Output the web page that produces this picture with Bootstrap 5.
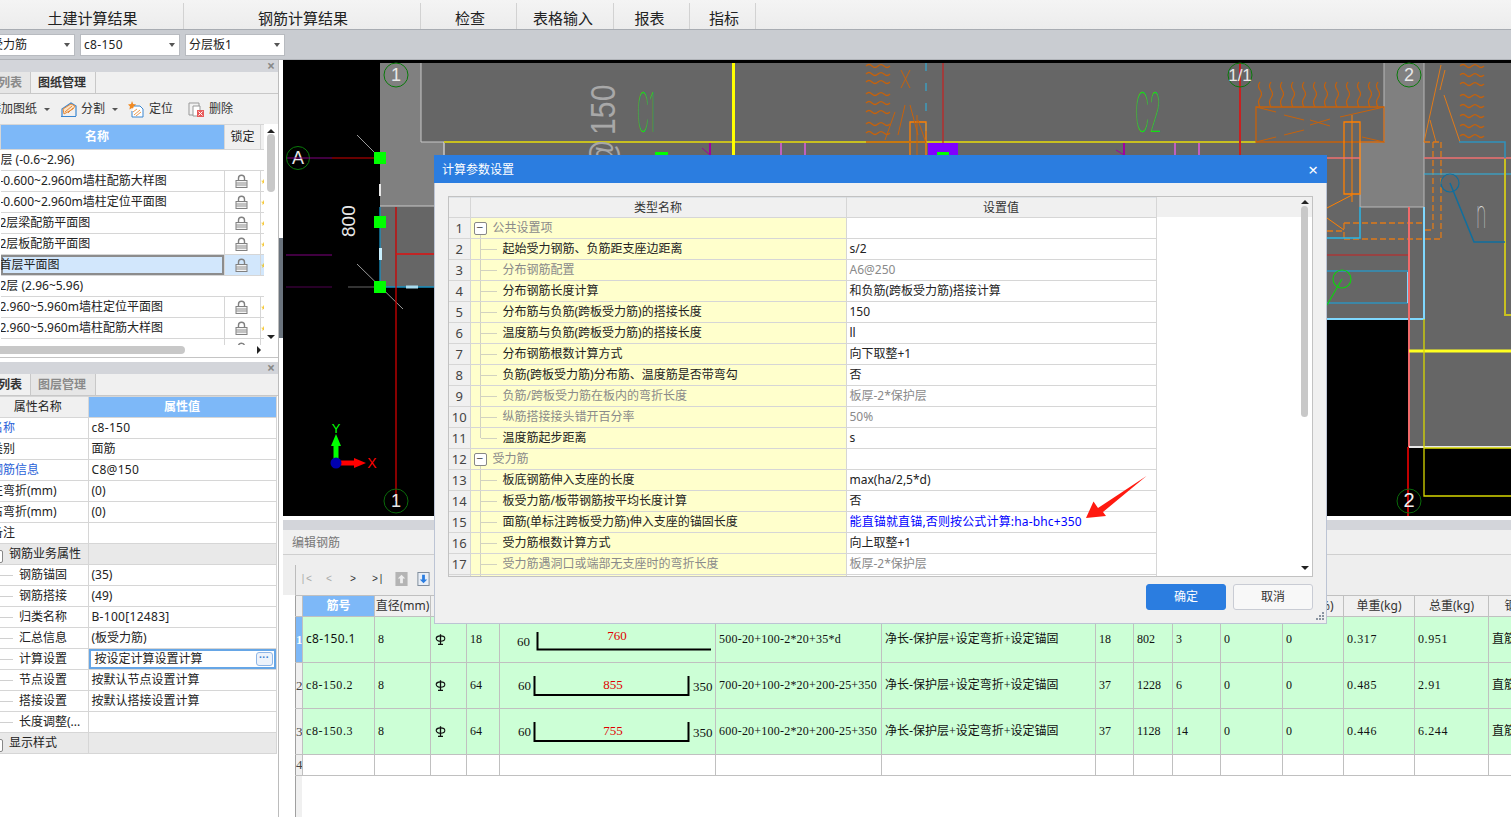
<!DOCTYPE html>
<html lang="zh-CN">
<head>
<meta charset="utf-8">
<title>计算参数设置</title>
<link rel="stylesheet" href="https://cdn.jsdelivr.net/npm/bootstrap@5.3.0/dist/css/bootstrap.min.css">
<style>
html,body{height:817px;overflow:hidden}
body{width:1511px;background:#fff;color:#222;font-family:"Noto Sans","Noto Sans CJK SC",sans-serif;font-size:12px;line-height:20px}
.sprite{width:0;height:0}
.topbar{height:30px;background:linear-gradient(#f4f4f4,#ececec);border-bottom:1px solid #a8acb2;color:#222;font-size:15px;padding-top:3px}
.topitem{border-right:1px solid #d2d2d2;height:26px;line-height:30px;text-align:center}
.ti1{width:184px;padding-left:2px}.ti2{width:237px;padding-left:2px}.ti3{width:96px;padding-left:3px}.ti4{width:97px;padding-right:4px}.ti5{width:76px;padding-right:4px}.ti6{width:66px;padding-left:3px}
.filterbar{height:30px;background:#c9ccd1;border-bottom:1px solid #b0b3b8;padding:4px 0 0;gap:5px}
.pick{height:22px;background:#fff;border:1px solid #b8bbc0;line-height:20px;padding-left:3px;overflow:hidden}
.pk1{width:75px;padding-left:0;border-left:0}.pk2,.pk3{width:100px}
.pick .clipl{margin-left:-9px}
.tri{width:0;height:0;border-left:3px solid transparent;border-right:3px solid transparent;border-top:4px solid #555;margin-right:4px}
.mainrow{height:757px}
.leftcol{width:279px;border-right:1px solid #bcbcbc;overflow:hidden}
.gutter{width:4px;background:#fff;padding-top:178px}
.gutter i{display:block;height:100px;background:#6a737d}
.rightcol{width:1228px;height:757px}
.strip{height:12px;background:#d3d5da;font-size:14px;line-height:11px;color:#888;padding-right:3px;text-align:right;font-weight:700}
.tabs{height:22px;background:#f0f0f0;border-bottom:1px solid #c8c8c8}
.tb{padding:0 7px;line-height:21px;border-right:1px solid #c8c8c8;font-weight:700;color:#333;white-space:nowrap;overflow:hidden}
.tb.off{background:#e6e6e6;color:#8a8a8a}
.tbf{width:31px;padding:0 8px 0 0}
.tbf2{width:65px}
.toolrow{height:30px;background:#f0f0f0;color:#333;white-space:nowrap}
.toolrow svg{flex:none}
.mcaret{width:0;height:0;border-left:3px solid transparent;border-right:3px solid transparent;border-top:3px solid #555}
.tw1{margin-left:-11px}
.c1{margin-left:7px}.c2{margin-left:10px}.gx1{margin-left:3px}.gx2{margin-left:5px}.m1{margin-left:7px}.m2{margin-left:10px}.m3{margin-left:15px}
.listbox{height:221px;overflow:hidden}
.listmain{width:264px;overflow:hidden}
.gt{table-layout:fixed;margin:0;border-collapse:collapse;--bs-table-bg:transparent}
.gt td,.gt th{padding:0 3px;height:21px;line-height:20px;font-size:12px;font-weight:400;white-space:nowrap;overflow:hidden;border:1px solid #d6d6d6;color:#222;background:transparent;box-shadow:none;vertical-align:middle}
.lt{width:264px}
.lt col:nth-child(1){width:224px}.lt col:nth-child(2){width:36px}.lt col:nth-child(3){width:4px}
.lt th{height:25px!important;background:#f0f0f0!important;text-align:center}
.lt th.namec{padding-right:34px}
.lt th.blu,.pt th.blu,.bt th.blu{background:#7db8f8!important;color:#fff;font-weight:700;text-align:center}
.lt td:first-child{padding-left:0;border-left:0}
.lt td:nth-child(3){padding:0;color:#f5c542;font-size:6px;border-right:0}
.lt .txt{margin-left:-1px}
.lt .gp{margin-left:-12px}
.lt td.lkc{padding:0;text-align:center}
.lk{width:13px;height:14px;display:block;margin:0 auto 0 10px}
.lt tr.selrow td{background:#d2e7fc}
.lt tr.selrow td:first-child{box-shadow:inset 0 0 0 2px #8c8c8c}
.vscroll{width:14px;padding-top:5px;padding-left:3px}
.vscroll .up,.gridbar .up{width:0;height:0;border-left:4px solid transparent;border-right:4px solid transparent;border-bottom:4px solid #222}
.vscroll .dn,.gridbar .dn{width:0;height:0;border-left:4px solid transparent;border-right:4px solid transparent;border-top:4px solid #222}
.vscroll .thumb{width:8px;height:58px;background:#c8c8c8;border-radius:4px;margin-top:1px;margin-bottom:143px}
.vscroll .dn{margin-top:4px}
.hscroll{height:13px;border-bottom:1px solid #c4c4c4;padding-top:1px}
.hscroll .thumb{width:185px;height:8px;background:#c8c8c8;border-radius:0 4px 4px 0}
.hscroll .rt{width:0;height:0;border-top:4px solid transparent;border-bottom:4px solid transparent;border-left:4px solid #222;margin-left:72px}
.gap4{height:4px;background:#fff}
.pt{width:276px}
.pt col:nth-child(1){width:88px}.pt col:nth-child(2){width:188px}
.pt th{background:#f0f0f0!important;text-align:center;line-height:20px}
.pt th.attr{padding-right:12px}
.pt td:first-child,.pt th:first-child{border-left:0;padding-left:0}
.nm{margin-left:-9px}
.nm.bl{color:#2a62d8}
.lt1{letter-spacing:.3px}
.pt tr.grp td{background:#e9e9e9}
.bx{display:inline-block;width:13px;height:13px;border:1px solid #888;border-radius:2px;line-height:9px;text-align:center;vertical-align:0;font-size:12px;color:#555;background:#fff}
.pt .bx{margin-left:-10px;margin-right:6px;vertical-align:-2px}
.pt td.tr1{background:linear-gradient(#d0d0d0,#d0d0d0) 0 50%/13px 1px no-repeat;padding-left:19px}
.pt td.focusc{box-shadow:inset 0 0 0 2px #66a6e6;padding-left:6px}
.more{width:17px;height:14px;border:1px solid #8fb6e6;border-radius:3px;background:#edf3fb;color:#3a7fd0;font-size:10px;line-height:8px;text-align:center;letter-spacing:.5px;margin-right:0;font-weight:700}
.canvas{display:block;flex:none}
.wgap{height:4px;background:#fff;flex:none}
.stripr{height:10px;background:#d3d5da;flex:none}
.edhead{height:25px;background:#f0f0f0;color:#777;line-height:25px;padding-left:9px;border-bottom:1px solid #cfcfcf;flex:none}
.edtool{height:40px;background:#eeeeee;padding:10px 0 0 12px;flex:none}
.edtool .inner{height:30px;border-left:1px solid #bcbcbc;padding-left:4px}
.edtool svg{margin-top:7px}
.nv{font-family:"Liberation Mono",monospace;font-size:10px;color:#333;line-height:30px}
.nv.gy{color:#aaa}
.g14{margin-left:14px}.g18{margin-left:18px}.g16{margin-left:16px}.g11{margin-left:11px}.g9{margin-left:9px}
.ebody{padding-left:12px;height:222px;overflow:hidden;flex:none}
.bt{width:1273px;border-top:1px solid #a0a0a0}
.bt col:nth-child(1){width:7px}.bt col:nth-child(2){width:72px}.bt col:nth-child(3){width:56px}.bt col:nth-child(4){width:36px}.bt col:nth-child(5){width:33px}.bt col:nth-child(6){width:216px}.bt col:nth-child(7){width:166px}.bt col:nth-child(8){width:214px}.bt col:nth-child(9){width:38px}.bt col:nth-child(10){width:39px}.bt col:nth-child(11){width:48px}.bt col:nth-child(12){width:62px}.bt col:nth-child(13){width:61px}.bt col:nth-child(14){width:71px}.bt col:nth-child(15){width:74px}.bt col:nth-child(16){width:80px}
.bt td,.bt th{border-color:#c0c0c0;color:#111}
.bt th{height:21px;background:#f0f0f0!important;text-align:center;padding:0;color:#333}
.bt td{height:46px;background:#ccffd6;font-family:"Liberation Serif","Noto Sans CJK SC",serif;padding:0 3px 1px}
.bt tr.lastrow td{height:20px;background:#fff}
.bt td.rn,.bt th.rn{padding:0;text-align:center;background:#f0f0f0!important;border-left:1px solid #a0a0a0;font-size:13px;color:#444;overflow:hidden}
.bt td.rn.on{background:#7db8f8!important;color:#fff;font-weight:700}
.bt td.sans{font-family:"Noto Sans","Noto Sans CJK SC",sans-serif;letter-spacing:.3px}
.bt td.shp{padding:0}
.shpsvg{display:block;width:216px;height:45px}
.shpsvg text{font-family:"Liberation Serif",serif;font-size:13px;fill:#111}
.shpsvg .rd{fill:#e00000}
.bt td.dc{letter-spacing:.6px}
.bt td.fm{letter-spacing:.22px}
.phi{display:block;width:11px;height:11px;margin-left:1px}
.rnfill{width:7px;background:#f0f0f0;border-left:1px solid #a0a0a0;height:60px}
.calcdlg{position:absolute;left:434px;top:155px;width:893px;height:469px;background:#f0f0f0;border:1px solid #bcc4d4;border-top:0;z-index:5}
.calcttl{height:28px;background:#2b7de0;color:#fff;padding:1px 8px 0;line-height:28px;margin:0 -1px}
.calcx{font-size:17px;font-weight:400;margin-right:1px}
.gridbox{margin:13px 13px 0 13px;height:381px;border:1px solid #c2c2c2;background:linear-gradient(#f0f0f0,#f0f0f0) top/100% 20px no-repeat #fff;overflow:hidden}
.gridmain{width:849px;overflow:hidden}
.dt{width:707px}
.dt col:nth-child(1){width:21px}.dt col:nth-child(2){width:376px}.dt col:nth-child(3){width:310px}
.dt th{height:19px!important;line-height:19px;text-align:center;background:#f0f0f0!important;border-top:0;color:#333}
.dt td:first-child,.dt th:first-child{border-left:0;background:#f0f0f0;text-align:center;font-size:13px;color:#444;padding:0}
.dt td:nth-child(2){background:#ffffcc linear-gradient(#d2d2c0,#d2d2c0) 9px 0/1px 100% no-repeat;padding-left:32px}
.dt tr.it td:nth-child(2){background:linear-gradient(#d2d2c0,#d2d2c0) 9px 0/1px 100% no-repeat,linear-gradient(#d2d2c0,#d2d2c0) 10px 50%/16px 1px no-repeat,#ffffcc}
.dt tr.last td:nth-child(2){background:linear-gradient(#d2d2c0,#d2d2c0) 9px 0/1px 50% no-repeat,linear-gradient(#d2d2c0,#d2d2c0) 10px 50%/16px 1px no-repeat,#ffffcc}
.dt tr.gh td:nth-child(2){padding-left:3px;color:#8a8a8a;background:linear-gradient(#d2d2c0,#d2d2c0) 9px 15px/1px 6px no-repeat,#ffffcc}
.dt tr.gh .bx{margin-right:6px}
.dt td.gr,.dt tr.off td:nth-child(2){color:#8a8a8a}
.dt td.bv{color:#0000ff;letter-spacing:.15px}
.gridbar{width:15px;padding:3px 0 0 4px}
.gridbar .thumb{width:7px;height:211px;border-radius:4px;background:#c8c8c8;margin:2px 0 149px}
.dlgbtns{margin:7px 13px 0 0;gap:7px}
.bta,.btb{width:80px;height:26px;font-size:12px;line-height:24px;padding:0;border-radius:3px}
.bta{background:#2b7de0;border:1px solid #2b7de0;color:#fff}
.btb{background:#f8f8f8;border:1px solid #c9ccd4;color:#333}
.grip{position:absolute;right:2px;bottom:2px;width:9px;height:9px}
.redarrow{position:absolute;left:0;top:0;width:893px;height:469px;pointer-events:none}
</style>
</head>
<body class="position-relative">
<svg class="sprite position-absolute" aria-hidden="true">
<defs>
<symbol id="lock" viewBox="0 0 13 14"><path d="M3.5 7V4.2a3 3 0 0 1 6 0V7" fill="none" stroke="#808080" stroke-width="1.4"/><rect x="1" y="6.5" width="11" height="7" fill="#f4f4f4" stroke="#808080"/><path d="M1 9h11M1 11h11" stroke="#909090"/></symbol>
<symbol id="phi" viewBox="0 0 11 11"><ellipse cx="5.500" cy="4.600" rx="4.300" ry="2.700" fill="none" stroke="#111" stroke-width="1.100"/><path d="M5.500 .3v10M3 10.300h5" stroke="#111" stroke-width="1.300"/></symbol>
</defs>
</svg>

<div class="topbar d-flex">
<div class="topitem ti1">土建计算结果</div>
<div class="topitem ti2">钢筋计算结果</div>
<div class="topitem ti3">检查</div>
<div class="topitem ti4">表格输入</div>
<div class="topitem ti5">报表</div>
<div class="topitem ti6">指标</div>
</div>

<div class="filterbar d-flex">
<div class="pick pk1 d-flex justify-content-between align-items-center"><span class="clipl">受力筋</span><i class="tri"></i></div>
<div class="pick pk2 d-flex justify-content-between align-items-center"><span class="lt1">c8-150</span><i class="tri"></i></div>
<div class="pick pk3 d-flex justify-content-between align-items-center"><span>分层板1</span><i class="tri"></i></div>
</div>

<div class="mainrow d-flex">
<aside class="leftcol flex-shrink-0">
  <div class="strip">×</div>
  <div class="tabs d-flex">
    <div class="tb off tbf d-flex justify-content-end">列表</div>
    <div class="tb tbf2">图纸管理</div>
  </div>
  <div class="toolrow d-flex align-items-center">
    <span class="tw1">添加图纸</span><i class="mcaret c1"></i>
    <svg class="c2" width="18" height="18" viewBox="0 0 18 18"><path d="M1 16.5h15M2 16V9l9-6 5 3v10" fill="none" stroke="#3a86d0" stroke-width="1.2"/><path d="M3 9l8-5 4 2-2 3-9 5zM5 12l7-6M8 13l5-5" fill="#fbe3c8" stroke="#e58a3a"/></svg>
    <span class="gx1">分割</span><i class="mcaret m1"></i>
    <svg class="m2" width="16" height="18" viewBox="0 0 16 18"><path d="M4 1l1.2 3 3 .4-2.2 2 .6 3L4 8 1.400 9.400 2 6.400 0 4.400l3-.4z" fill="#f08a24"/><path d="M6 6h6l3 3v8H4v-6" fill="#fff" stroke="#3a86d0"/><path d="M6 15l6-5M8 16l5-4M5 12l4-3" stroke="#ea9a50"/></svg>
    <span class="gx2">定位</span>
    <svg class="m3" width="16" height="18" viewBox="0 0 16 18"><path d="M3 3h8v12H1V3z" fill="#f2f2f2" stroke="#999"/><path d="M5 6h7v10H5z" fill="#fff" stroke="#999"/><rect x="9" y="10" width="7" height="7" fill="#e85a5a"/><path d="M10.500 11.500l4 4m0-4l-4 4" stroke="#fff"/></svg>
    <span class="gx2">删除</span>
  </div>
  <div class="listbox d-flex">
    <div class="listmain">
      <table class="table table-bordered gt lt">
        <colgroup><col><col><col></colgroup>
        <thead><tr><th class="blu namec">名称</th><th>锁定</th><th></th></tr></thead>
        <tbody>
          <tr><td colspan="3"><span class="gp">首层 (-0.6~2.96)</span></td></tr>
          <tr><td><span class="txt">-0.600~2.960m墙柱配筋大样图</span></td><td class="lkc"><svg class="lk"><use href="#lock"/></svg></td><td>★</td></tr>
          <tr><td><span class="txt">-0.600~2.960m墙柱定位平面图</span></td><td class="lkc"><svg class="lk"><use href="#lock"/></svg></td><td>★</td></tr>
          <tr><td><span class="txt">2层梁配筋平面图</span></td><td class="lkc"><svg class="lk"><use href="#lock"/></svg></td><td>★</td></tr>
          <tr><td><span class="txt">2层板配筋平面图</span></td><td class="lkc"><svg class="lk"><use href="#lock"/></svg></td><td>★</td></tr>
          <tr class="selrow"><td><span class="txt">首层平面图</span></td><td class="lkc"><svg class="lk"><use href="#lock"/></svg></td><td>★</td></tr>
          <tr><td colspan="3"><span class="txt">2层 (2.96~5.96)</span></td></tr>
          <tr><td><span class="txt">2.960~5.960m墙柱定位平面图</span></td><td class="lkc"><svg class="lk"><use href="#lock"/></svg></td><td>★</td></tr>
          <tr><td><span class="txt">2.960~5.960m墙柱配筋大样图</span></td><td class="lkc"><svg class="lk"><use href="#lock"/></svg></td><td>★</td></tr>
          <tr><td></td><td class="lkc"><svg class="lk"><use href="#lock"/></svg></td><td></td></tr>
        </tbody>
      </table>
    </div>
    <div class="vscroll">
      <div class="up"></div>
      <div class="thumb"></div>
      <div class="dn"></div>
    </div>
  </div>
  <div class="hscroll d-flex">
    <div class="thumb"></div>
    <div class="rt"></div>
  </div>
  <div class="gap4"></div>
  <div class="strip">×</div>
  <div class="tabs d-flex">
    <div class="tb tbf d-flex justify-content-end">列表</div>
    <div class="tb off tbf2">图层管理</div>
  </div>
  <table class="table table-bordered gt pt">
    <colgroup><col><col></colgroup>
    <thead><tr><th class="attr">属性名称</th><th class="blu">属性值</th></tr></thead>
    <tbody>
      <tr><td><span class="nm bl">名称</span></td><td><span class="lt1">c8-150</span></td></tr>
      <tr><td><span class="nm">类别</span></td><td>面筋</td></tr>
      <tr><td><span class="nm bl">钢筋信息</span></td><td><span class="lt1">C8@150</span></td></tr>
      <tr><td><span class="nm">左弯折(mm)</span></td><td>(0)</td></tr>
      <tr><td><span class="nm">右弯折(mm)</span></td><td>(0)</td></tr>
      <tr><td><span class="nm">备注</span></td><td></td></tr>
      <tr class="grp"><td><span class="bx">+</span>钢筋业务属性</td><td></td></tr>
      <tr><td class="tr1">钢筋锚固</td><td>(35)</td></tr>
      <tr><td class="tr1">钢筋搭接</td><td>(49)</td></tr>
      <tr><td class="tr1">归类名称</td><td><span class="lt1">B-100[12483]</span></td></tr>
      <tr><td class="tr1">汇总信息</td><td>(板受力筋)</td></tr>
      <tr><td class="tr1">计算设置</td><td class="focusc"><div class="d-flex justify-content-between align-items-center"><span>按设定计算设置计算</span><span class="more">···</span></div></td></tr>
      <tr><td class="tr1">节点设置</td><td>按默认节点设置计算</td></tr>
      <tr><td class="tr1">搭接设置</td><td>按默认搭接设置计算</td></tr>
      <tr><td class="tr1">长度调整(...</td><td></td></tr>
      <tr class="grp"><td><span class="bx">+</span>显示样式</td><td></td></tr>
    </tbody>
  </table>
</aside>
<div class="gutter flex-shrink-0"><i></i></div>
<div class="rightcol d-flex flex-column">
<svg class="canvas" width="1228" height="456" viewBox="283 60 1228 456" font-family="Liberation Sans, sans-serif">
<defs>
<path id="wh" d="M0 0q3-3 6 0t6 0 6 0 6 0" fill="none" stroke="#c8620a" stroke-width="1.200"/>
<path id="wv" d="M0 0q-3 4 0 8t0 8 0 9" fill="none" stroke="#c8620a" stroke-width="1.200"/>
</defs>
<rect x="283" y="60" width="1228" height="456" fill="#000"/>
<path d="M380 63H1511V447H1409V319H900V287H380Z" fill="#666"/>
<path d="M380 63H421V142H444V206H380Z M1384 63H1424V207H1360V142H1384Z" fill="#808080"/>
<path d="M421 63V142H444V155M380 206H444V142" fill="none" stroke="#c8c8c8"/>
<path d="M1384 63V142H1360V207H1424V63" fill="none" stroke="#b8b8b8"/>
<path d="M444 142H1256" stroke="#c8c020" stroke-width="2"/>
<path d="M733.500 63V155" stroke="#ffff00" stroke-width="3"/>
<path d="M710 143V155" stroke="#a000a0" stroke-width="2"/><path d="M702 148L710 155" stroke="#a000a0"/>
<path d="M781 143V155M805 143V155M1175 143V155M1199 143V155" stroke="#c060c0" stroke-width="2"/>
<path d="M1124 143V155" stroke="#a000a0" stroke-width="2"/><path d="M1116 150L1124 155" stroke="#a000a0"/>
<rect x="655" y="152" width="13" height="4" fill="#0f0"/>
<rect x="928" y="143" width="30" height="13" fill="#8000ff"/>
<rect x="937" y="152" width="12" height="4" fill="#0f0"/>
<path d="M926 63V143" stroke="#29b6e8" stroke-dasharray="8 12"/>
<path d="M943 63V143" stroke="#c82020" stroke-width="1.200"/>
<path d="M910 155V122H926V155" fill="none" stroke="#ff8000" stroke-width="1.300"/>
<path d="M901 70L910 88M910 70L901 88M905 105L898 135M910 105L918 135M885 140L895 112M918 120L926 143M917 115V155" fill="none" stroke="#c8620a"/>
<path d="M866 142H926" stroke="#c8620a" stroke-width="1.300"/>
<use href="#wh" x="866" y="66"/><use href="#wh" x="866" y="74"/><use href="#wh" x="866" y="82"/><use href="#wh" x="866" y="94"/><use href="#wh" x="866" y="103"/><use href="#wh" x="866" y="112"/><use href="#wh" x="866" y="124"/><use href="#wh" x="866" y="133"/>
<path d="M1256 107H1384V142H1256Z" fill="none" stroke="#c8620a" stroke-width="1.300"/>
<path d="M1256 142L1276 137M1256 107L1276 112M1284 115L1304 120M1284 135L1304 130M1310 125L1330 119M1310 120L1330 126M1340 117L1362 112M1362 137L1384 142M1362 112L1384 107" stroke="#c8620a"/>
<use href="#wv" x="1260" y="82"/><use href="#wv" x="1271" y="82"/><use href="#wv" x="1282" y="82"/><use href="#wv" x="1293" y="82"/><use href="#wv" x="1304" y="82"/><use href="#wv" x="1315" y="82"/><use href="#wv" x="1326" y="82"/><use href="#wv" x="1337" y="82"/><use href="#wv" x="1348" y="82"/><use href="#wv" x="1359" y="82"/><use href="#wv" x="1370" y="82"/><use href="#wv" x="1378" y="82"/>
<path d="M1344 122H1360V194H1344Z" fill="none" stroke="#ff8000" stroke-width="1.300"/>
<path d="M1352 115V202M1327 208L1352 195M1327 218L1344 230" stroke="#ff8000"/>
<path d="M1344 223H1424M1327 231H1344M1344 239H1441M1441 142V239M1433 142V230H1424M1424 142H1441M1344 223V239" fill="none" stroke="#e07a18" stroke-width="1.300" stroke-dasharray="6 3"/>
<path d="M1424 142L1441 65M1430 120L1436 142M1444 95L1460 142M1445 70L1440 90" stroke="#e07a18" fill="none"/>
<use href="#wh" x="1460" y="66"/><use href="#wh" x="1460" y="75"/><use href="#wh" x="1460" y="84"/><use href="#wh" x="1460" y="96"/><use href="#wh" x="1460" y="106"/><use href="#wh" x="1460" y="116"/><use href="#wh" x="1460" y="126"/><use href="#wh" x="1460" y="136"/>
<path d="M1327 158H1360M1424 158H1511" stroke="#f07070" stroke-width="1.500"/>
<path d="M1424 174H1511" stroke="#29b6e8"/>
<path d="M1459 142H1505V158" fill="none" stroke="#2f93bd" stroke-width="1.500"/>
<path d="M1505 159V315H1511" fill="none" stroke="#c8c020" stroke-width="2"/>
<circle cx="1450" cy="183" r="9" fill="none" stroke="#0f6f9f" stroke-width="1.200"/>
<path d="M1450 183L1474 242H1505" fill="none" stroke="#0f6f9f" stroke-width="1.500"/>
<text transform="translate(1476,228) scale(.45,1)" font-size="40" font-family="Inter, Lato, sans-serif" font-weight="100" fill="#d8d8d8">n</text>
<path d="M1360 207V238H1327" fill="none" stroke="#29b6e8" stroke-width="1.500"/>
<path d="M1424 207V319H1327" fill="none" stroke="#7fd8ff" stroke-width="2"/>
<path d="M1327 255H1408" stroke="#c82020" stroke-width="1.200"/>
<path d="M1327 271H1408V303H1327" fill="none" stroke="#2f93bd" stroke-width="1.500"/>
<path d="M1408 272V303" stroke="#7fd8ff" stroke-width="2"/>
<circle cx="1342" cy="279" r="9" fill="none" stroke="#10d010" stroke-width="1.200"/>
<path d="M1342 279L1327 305" stroke="#10d010" stroke-width="1.200"/>
<path d="M1409 207V447H1511" fill="none" stroke="#f06a6a" stroke-width="2"/>
<path d="M1409 447H1511" stroke="#e8e8e8" stroke-width="2"/>
<path d="M1408 447V516" stroke="#c00000" stroke-width="2"/>
<path d="M1409 351H1511" stroke="#ffff20" stroke-width="3"/>
<path d="M1424 319V496H1511M1424 448H1511" fill="none" stroke="#d8d800" stroke-width="1.300"/>
<path d="M1240 63V155" stroke="#c82020" stroke-width="2"/>
<circle cx="1240" cy="75" r="12" fill="none" stroke="#0a7a0a"/>
<text x="1240" y="81" font-size="17" fill="#e8e8e8" text-anchor="middle">1/1</text>
<circle cx="1409" cy="75" r="12" fill="none" stroke="#0a7a0a"/>
<text x="1409" y="81" font-size="18" fill="#e8e8e8" text-anchor="middle">2</text>
<circle cx="396" cy="75" r="12" fill="none" stroke="#0a7a0a"/>
<text x="396" y="81" font-size="18" fill="#e8e8e8" text-anchor="middle">1</text>
<circle cx="298" cy="158" r="11.500" fill="none" stroke="#0a7a0a"/>
<text x="298" y="164" font-size="18" fill="#e8e8e8" text-anchor="middle">A</text>
<path d="M287 158H332" stroke="#800080" stroke-width="1.200"/><path d="M332 158H375" stroke="#d00000" stroke-width="1.200"/>
<path d="M357 135L375 153M357 264L403 309" stroke="#9a9a9a"/>
<path d="M380 207V287H434" fill="none" stroke="#1890c0" stroke-width="1.300"/>
<path d="M396 207V501" stroke="#d00000" stroke-width="1.300"/>
<path d="M396 254H434" stroke="#e01010" stroke-width="1.300"/>
<path d="M286 255H332" stroke="#800080"/><path d="M286 287H332" stroke="#500050"/><path d="M348 287H375" stroke="#666"/>
<path d="M380 184V196" stroke="#e8e8e8" stroke-width="2"/><path d="M380.500 248V260" stroke="#c8f0ff" stroke-width="3"/><path d="M406 287H418" stroke="#a8dcf0" stroke-width="3"/>
<rect x="374" y="152" width="12" height="12" fill="#0f0"/><rect x="374" y="216" width="12" height="12" fill="#0f0"/><rect x="374" y="281" width="12" height="12" fill="#0f0"/>
<text transform="translate(355,237) rotate(-90)" font-size="19" fill="#e8e8e8">800</text>
<text transform="translate(615,135) rotate(-90) scale(.84,1)" font-size="36" fill="#a8a8a8">150</text>
<text transform="translate(615,170) rotate(-90) scale(.84,1)" font-size="36" fill="#a8a8a8">@</text>
<text transform="translate(637,132) scale(.3,1)" font-size="55" font-family="Inter, Lato, sans-serif" font-weight="100" fill="#10e010">C1</text>
<text transform="translate(1135,132) scale(.36,1)" font-size="55" font-family="Inter, Lato, sans-serif" font-weight="100" fill="#10e010">C2</text>
<path d="M336 463V445" stroke="#0f0" stroke-width="5"/><path d="M336 434L341 446H331Z" fill="#0f0"/>
<text x="336" y="433" font-size="13" fill="#0f0" text-anchor="middle">Y</text>
<path d="M341 463H358" stroke="#f00" stroke-width="5"/><path d="M366 463L354 458V468Z" fill="#f00"/>
<text x="372" y="468" font-size="14" fill="#f00" text-anchor="middle">X</text>
<circle cx="336" cy="463" r="5.500" fill="#0000b0"/>
<circle cx="396" cy="501" r="12" fill="none" stroke="#0a6a0a"/>
<text x="396" y="507" font-size="18" fill="#e8e8e8" text-anchor="middle">1</text>
<circle cx="1409" cy="501" r="12" fill="none" stroke="#0a6a0a"/>
<text x="1409" y="507" font-size="20" fill="#f0f0f0" text-anchor="middle">2</text>
</svg>
<div class="wgap"></div>
<div class="stripr"></div>
<div class="edhead">编辑钢筋</div>
<div class="edtool">
  <div class="inner d-flex">
    <span class="nv gy">|&lt;</span><span class="nv gy g14">&lt;</span><span class="nv g18">&gt;</span><span class="nv g16">&gt;|</span>
    <svg class="g11" width="13" height="14" viewBox="0 0 13 15"><rect width="13" height="15" fill="#b4b4b4"/><path d="M6.500 3l4 4H8v5H5V7H2.500z" fill="#eee"/></svg>
    <svg class="g9" width="13" height="14" viewBox="0 0 13 15"><rect x=".5" y=".5" width="12" height="14" fill="#e8eef6" stroke="#7a8898"/><path d="M6.500 12l4-4H8V3H5v5H2.500z" fill="#2b7de0"/></svg>
  </div>
</div>
<div class="ebody">
<table class="table table-bordered gt bt">
<colgroup><col><col><col><col><col><col><col><col><col><col><col><col><col><col><col><col></colgroup>
<thead><tr><th class="rn"></th><th class="blu">筋号</th><th>直径(mm)</th><th>级别</th><th>图号</th><th>图形</th><th>计算公式</th><th>公式描述</th><th></th><th></th><th></th><th></th><th>损耗(%)</th><th>单重(kg)</th><th>总重(kg)</th><th>钢筋归类</th></tr></thead>
<tbody>
<tr><td class="rn on">1</td><td class="sans">c8-150.1</td><td>8</td><td><svg class="phi"><use href="#phi"/></svg></td><td>18</td>
<td class="shp"><svg class="shpsvg" viewBox="0 0 216 45"><text x="17" y="29">60</text><text class="rd" x="117" y="23" text-anchor="middle">760</text><path d="M37.500 15V32.500H211" fill="none" stroke="#000" stroke-width="2"/></svg></td>
<td class="fm">500-20+100-2*20+35*d</td><td>净长-保护层+设定弯折+设定锚固</td><td>18</td><td>802</td><td>3</td><td>0</td><td>0</td><td class="dc">0.317</td><td class="dc">0.951</td><td>直筋</td></tr>
<tr><td class="rn">2</td><td class="dc">c8-150.2</td><td>8</td><td><svg class="phi"><use href="#phi"/></svg></td><td>64</td>
<td class="shp"><svg class="shpsvg" viewBox="0 0 216 45"><text x="18" y="27">60</text><text class="rd" x="113" y="26" text-anchor="middle">855</text><text x="193" y="28">350</text><path d="M34.500 13V32H188.500V13" fill="none" stroke="#000" stroke-width="2"/></svg></td>
<td class="fm">700-20+100-2*20+200-25+350</td><td>净长-保护层+设定弯折+设定锚固</td><td>37</td><td>1228</td><td>6</td><td>0</td><td>0</td><td class="dc">0.485</td><td class="dc">2.91</td><td>直筋</td></tr>
<tr><td class="rn">3</td><td class="dc">c8-150.3</td><td>8</td><td><svg class="phi"><use href="#phi"/></svg></td><td>64</td>
<td class="shp"><svg class="shpsvg" viewBox="0 0 216 45"><text x="18" y="27">60</text><text class="rd" x="113" y="26" text-anchor="middle">755</text><text x="193" y="28">350</text><path d="M34.500 13V32H188.500V13" fill="none" stroke="#000" stroke-width="2"/></svg></td>
<td class="fm">600-20+100-2*20+200-25+350</td><td>净长-保护层+设定弯折+设定锚固</td><td>37</td><td>1128</td><td>14</td><td>0</td><td>0</td><td class="dc">0.446</td><td class="dc">6.244</td><td>直筋</td></tr>
<tr class="lastrow"><td class="rn">4</td><td></td><td></td><td></td><td></td><td></td><td></td><td></td><td></td><td></td><td></td><td></td><td></td><td></td><td></td><td></td></tr>
</tbody>
</table>
<div class="rnfill"></div>
</div>
</div>
</div>

<div class="calcdlg">
  <div class="calcttl d-flex justify-content-between align-items-center"><span>计算参数设置</span><span class="calcx">×</span></div>
  <div class="gridbox d-flex">
    <div class="gridmain">
      <table class="table table-bordered gt dt">
        <colgroup><col><col><col></colgroup>
        <thead><tr><th></th><th>类型名称</th><th>设置值</th></tr></thead>
        <tbody>
          <tr class="gh"><td>1</td><td><span class="bx">−</span>公共设置项</td><td></td></tr>
          <tr class="it"><td>2</td><td>起始受力钢筋、负筋距支座边距离</td><td>s/2</td></tr>
          <tr class="it off"><td>3</td><td>分布钢筋配置</td><td class="gr">A6@250</td></tr>
          <tr class="it"><td>4</td><td>分布钢筋长度计算</td><td>和负筋(跨板受力筋)搭接计算</td></tr>
          <tr class="it"><td>5</td><td>分布筋与负筋(跨板受力筋)的搭接长度</td><td>150</td></tr>
          <tr class="it"><td>6</td><td>温度筋与负筋(跨板受力筋)的搭接长度</td><td>ll</td></tr>
          <tr class="it"><td>7</td><td>分布钢筋根数计算方式</td><td>向下取整+1</td></tr>
          <tr class="it"><td>8</td><td>负筋(跨板受力筋)分布筋、温度筋是否带弯勾</td><td>否</td></tr>
          <tr class="it off"><td>9</td><td>负筋/跨板受力筋在板内的弯折长度</td><td class="gr">板厚-2*保护层</td></tr>
          <tr class="it off"><td>10</td><td>纵筋搭接接头错开百分率</td><td class="gr">50%</td></tr>
          <tr class="last"><td>11</td><td>温度筋起步距离</td><td>s</td></tr>
          <tr class="gh"><td>12</td><td><span class="bx">−</span>受力筋</td><td></td></tr>
          <tr class="it"><td>13</td><td>板底钢筋伸入支座的长度</td><td>max(ha/2,5*d)</td></tr>
          <tr class="it"><td>14</td><td>板受力筋/板带钢筋按平均长度计算</td><td>否</td></tr>
          <tr class="it"><td>15</td><td>面筋(单标注跨板受力筋)伸入支座的锚固长度</td><td class="bv">能直锚就直锚,否则按公式计算:ha-bhc+350</td></tr>
          <tr class="it"><td>16</td><td>受力筋根数计算方式</td><td>向上取整+1</td></tr>
          <tr class="it off"><td>17</td><td>受力筋遇洞口或端部无支座时的弯折长度</td><td class="gr">板厚-2*保护层</td></tr>
          <tr class="it"><td></td><td></td><td></td></tr>
        </tbody>
      </table>
    </div>
    <div class="gridbar">
      <div class="up"></div>
      <div class="thumb"></div>
      <div class="dn"></div>
    </div>
  </div>
  <div class="dlgbtns d-flex justify-content-end">
    <button type="button" class="btn bta">确定</button>
    <button type="button" class="btn btb">取消</button>
  </div>
  <svg class="grip" viewBox="0 0 9 9"><path d="M7 0h2v2H7zM4 3h2v2H4zM7 3h2v2H7zM1 6h2v2H1zM4 6h2v2H4zM7 6h2v2H7z" fill="#8a94a0"/></svg>
  <svg class="redarrow" viewBox="434 155 893 469"><path d="M1085 518L1092.500 501.500 1097 508 1145.500 476 1102 512 1105 516Z" fill="#ff1a10"/></svg>
</div>
<script src="https://cdn.jsdelivr.net/npm/bootstrap@5.3.0/dist/js/bootstrap.bundle.min.js"></script>
</body>
</html>
